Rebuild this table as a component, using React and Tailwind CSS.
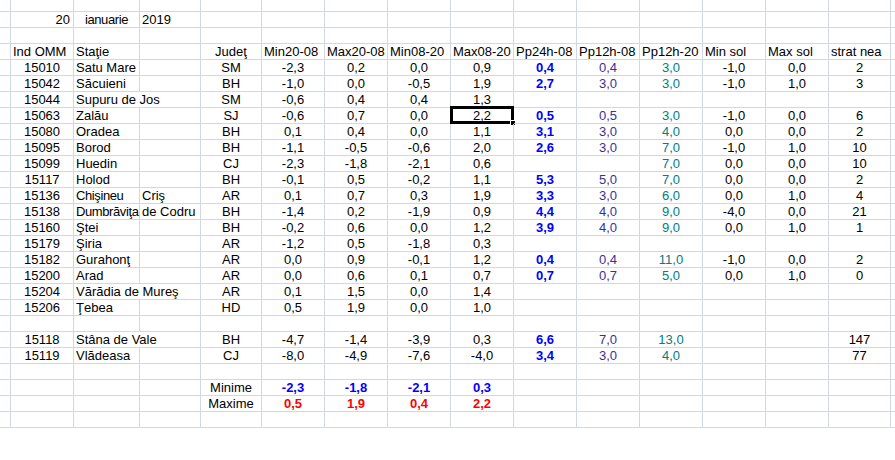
import React from 'react';

const GRID = 'border-r border-b border-[#d0d7e5]';

// column styles for the station rows (after the partial first column)
const colStyle = [
  'justify-center',
  'justify-start pl-[2px]',
  'justify-start pl-[2px]',
  'justify-center',
  'justify-center',
  'justify-center',
  'justify-center',
  'justify-center',
  'justify-center font-bold text-[#0000ff]',
  'justify-center text-[#333399]',
  'justify-center text-[#008080]',
  'justify-center',
  'justify-center',
  'justify-center',
];

const stations = [
  ['15010', 'Satu Mare', '', 'SM', '-2,3', '0,2', '0,0', '0,9', '0,4', '0,4', '3,0', '-1,0', '0,0', '2'],
  ['15042', 'Săcuieni', '', 'BH', '-1,0', '0,0', '-0,5', '1,9', '2,7', '3,0', '3,0', '-1,0', '1,0', '3'],
  ['15044', 'Supuru de Jos', null, 'SM', '-0,6', '0,4', '0,4', '1,3', '', '', '', '', '', ''],
  ['15063', 'Zalău', '', 'SJ', '-0,6', '0,7', '0,0', '2,2', '0,5', '0,5', '3,0', '-1,0', '0,0', '6'],
  ['15080', 'Oradea', '', 'BH', '0,1', '0,4', '0,0', '1,1', '3,1', '3,0', '4,0', '0,0', '0,0', '2'],
  ['15095', 'Borod', '', 'BH', '-1,1', '-0,5', '-0,6', '2,0', '2,6', '3,0', '7,0', '-1,0', '1,0', '10'],
  ['15099', 'Huedin', '', 'CJ', '-2,3', '-1,8', '-2,1', '0,6', '', '', '7,0', '0,0', '0,0', '10'],
  ['15117', 'Holod', '', 'BH', '-0,1', '0,5', '-0,2', '1,1', '5,3', '5,0', '7,0', '0,0', '0,0', '2'],
  ['15136', 'Chişineu', 'Criş', 'AR', '0,1', '0,7', '0,3', '1,9', '3,3', '3,0', '6,0', '0,0', '1,0', '4'],
  ['15138', 'Dumbrăviţa', 'de Codru', 'BH', '-1,4', '0,2', '-1,9', '0,9', '4,4', '4,0', '9,0', '-4,0', '0,0', '21'],
  ['15160', 'Ştei', '', 'BH', '-0,2', '0,6', '0,0', '1,2', '3,9', '4,0', '9,0', '0,0', '1,0', '1'],
  ['15179', 'Şiria', '', 'AR', '-1,2', '0,5', '-1,8', '0,3', '', '', '', '', '', ''],
  ['15182', 'Gurahonţ', '', 'AR', '0,0', '0,9', '-0,1', '1,2', '0,4', '0,4', '11,0', '-1,0', '0,0', '2'],
  ['15200', 'Arad', '', 'AR', '0,0', '0,6', '0,1', '0,7', '0,7', '0,7', '5,0', '0,0', '1,0', '0'],
  ['15204', 'Vărădia de Mureş', null, 'AR', '0,1', '1,5', '0,0', '1,4', '', '', '', '', '', ''],
  ['15206', 'Ţebea', '', 'HD', '0,5', '1,9', '0,0', '1,0', '', '', '', '', '', ''],
];

const mountain = [
  ['15118', 'Stâna de Vale', null, 'BH', '-4,7', '-1,4', '-3,9', '0,3', '6,6', '7,0', '13,0', '', '', '147'],
  ['15119', 'Vlădeasa', '', 'CJ', '-8,0', '-4,9', '-7,6', '-4,0', '3,4', '3,0', '4,0', '', '', '77'],
];

const empty = Array(14).fill('');

const headers = ['Ind OMM', 'Staţie', '', 'Judeţ', 'Min20-08', 'Max20-08', 'Min08-20', 'Max08-20', 'Pp24h-08', 'Pp12h-08', 'Pp12h-20', 'Min sol', 'Max sol', 'strat nea'];
const headerStyle = headers.map((h, i) => (i === 3 ? 'justify-center' : 'justify-start pl-[2px]'));

const dateRow = ['20', 'ianuarie', '2019', '', '', '', '', '', '', '', '', '', '', ''];
const dateStyle = ['justify-end pr-[3px]', 'justify-center', 'justify-start pl-[2px]', ...Array(11).fill('')];

const minRow = ['', '', '', 'Minime', '-2,3', '-1,8', '-2,1', '0,3', '', '', '', '', '', ''];
const maxRow = ['', '', '', 'Maxime', '0,5', '1,9', '0,4', '2,2', '', '', '', '', '', ''];
const minStyle = colStyle.map((s, i) => (i >= 4 && i <= 7 ? 'justify-center font-bold text-[#0000ff]' : 'justify-center'));
const maxStyle = colStyle.map((s, i) => (i >= 4 && i <= 7 ? 'justify-center font-bold text-[#ff0000]' : 'justify-center'));

function Row({ cells, styles, selected }) {
  const out = [<div key="p" className={`h-[16px] ${GRID}`} />];
  for (let i = 0; i < cells.length; i++) {
    const span = cells[i + 1] === null;
    const isSel = selected === i;
    const tight = i === 1 && cells[i + 1] ? 'tracking-[-0.4px]' : '';
    out.push(
      <div
        key={i}
        className={`relative h-[16px] flex items-center whitespace-nowrap leading-[15px] ${GRID} ${styles[i]} ${tight} ${span ? 'col-span-2' : ''}`}
      >
        {cells[i]}
        {isSel && (
          <>
            <div className="absolute left-[-1px] top-[-2px] right-[-1px] bottom-[-1px] border-[3px] border-black" />
            <div className="absolute right-[-3px] bottom-[-3px] w-[6px] h-[6px] bg-black border border-white" />
          </>
        )}
      </div>
    );
    if (span) i++;
  }
  out.push(<div key="t" className="h-[16px] border-b border-[#d0d7e5]" />);
  return out;
}

export default function App() {
  return (
    <div className="w-[895px] h-[460px] bg-white overflow-hidden text-[13px] text-black" style={{ fontFamily: '"Liberation Sans", Arial, sans-serif' }}>
      <div className="grid grid-cols-[11px_63px_66px_61px_61px_63px_63px_63px_63px_63px_63px_63px_63px_63px_62px_1fr]">
        {/* partial top row */}
        <div className={`h-[12px] ${GRID}`} />
        {Array.from({ length: 14 }).map((_, i) => (
          <div key={`top${i}`} className={`h-[12px] ${GRID}`} />
        ))}
        <div className="h-[12px] border-b border-[#d0d7e5]" />

        <Row cells={dateRow} styles={dateStyle} />
        <Row cells={empty} styles={colStyle} />
        <Row cells={headers} styles={headerStyle} />
        {stations.map((s, i) => (
          <Row key={s[0]} cells={s} styles={colStyle} selected={i === 3 ? 7 : -1} />
        ))}
        <Row cells={empty} styles={colStyle} />
        {mountain.map((s) => (
          <Row key={s[0]} cells={s} styles={colStyle} />
        ))}
        <Row cells={empty} styles={colStyle} />
        <Row cells={minRow} styles={minStyle} />
        <Row cells={maxRow} styles={maxStyle} />
        <Row cells={empty} styles={colStyle} />
      </div>
    </div>
  );
}
